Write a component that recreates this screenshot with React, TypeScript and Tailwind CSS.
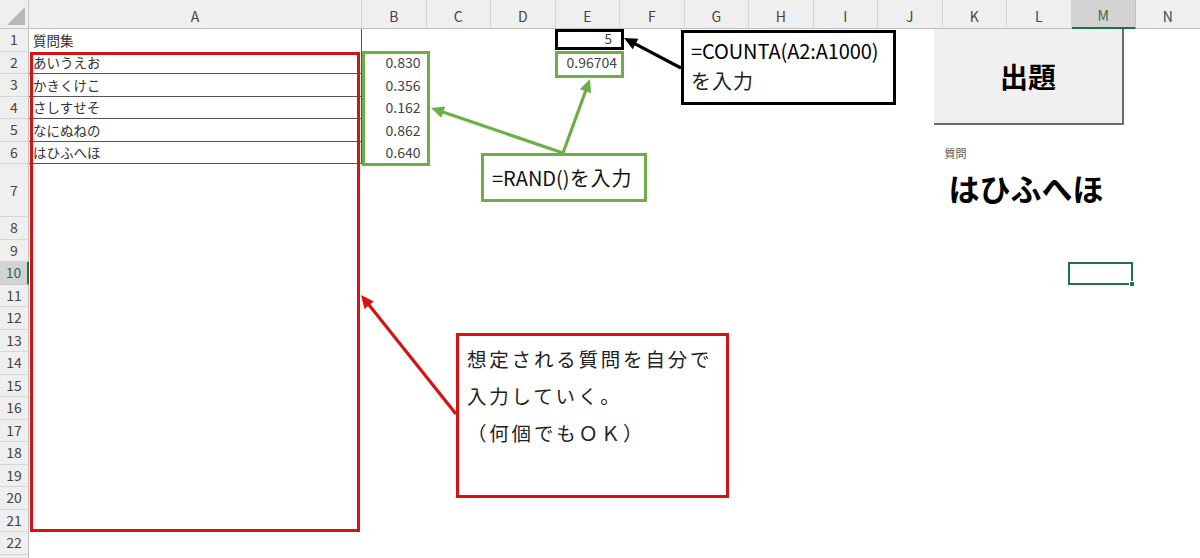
import React from "react";

const FONT = { fontFamily: '"Noto Sans CJK JP", "Noto Sans", sans-serif' };

const COLS = ["A", "B", "C", "D", "E", "F", "G", "H", "I", "J", "K", "L", "M", "N"];
const ROWS = Array.from({ length: 22 }, (_, i) => i + 1);

const questions = ["あいうえお", "かきくけこ", "さしすせそ", "なにぬねの", "はひふへほ"];
const rands = ["0.830", "0.356", "0.162", "0.862", "0.640"];

// draws a straight arrow with a filled head ending exactly at (x2, y2)
function Arrow({ x1, y1, x2, y2, color }: { x1: number; y1: number; x2: number; y2: number; color: string }) {
  const dx = x2 - x1;
  const dy = y2 - y1;
  const len = Math.hypot(dx, dy);
  const ux = dx / len;
  const uy = dy / len;
  const head = 13;
  const hw = 6;
  const bx = x2 - ux * head;
  const by = y2 - uy * head;
  const px = -uy * hw;
  const py = ux * hw;
  return (
    <g>
      <line x1={x1} y1={y1} x2={bx + ux * 2} y2={by + uy * 2} stroke={color} strokeWidth={3.2} />
      <polygon points={`${x2},${y2} ${bx + px},${by + py} ${bx - px},${by - py}`} fill={color} />
    </g>
  );
}

function Cell({ row, col }: { row: number; col: number }) {
  // column A, rows 1-6 hold the bordered question list
  if (col === 1) {
    if (row <= 6) {
      const text = row === 1 ? "質問集" : questions[row - 2];
      return (
        <div className={`flex items-center pl-[4px] text-[13.5px] text-[#333] border-r border-r-[#555] ${row >= 2 ? "border-b border-b-[#555]" : ""}`}>
          {text}
        </div>
      );
    }
    return <div />;
  }
  if (col === 2 && row >= 2 && row <= 6) {
    return <div className="flex items-center justify-end pr-[6px] text-[14px] text-[#444]">{rands[row - 2]}</div>;
  }
  if (col === 5 && row === 1) {
    return <div className="flex items-center justify-end pr-[8px] pb-[4px] text-[13.5px] text-[#444]">5</div>;
  }
  if (col === 5 && row === 2) {
    return <div className="flex items-center justify-end pr-[3px] text-[14px] text-[#444]">0.96704</div>;
  }
  if (col === 11 && row === 6) {
    return <div className="flex items-center pl-[2px] text-[11px] text-[#555] whitespace-nowrap">質問</div>;
  }
  if (col === 11 && row === 7) {
    return <div className="flex items-center pl-[6px] pb-[4px] text-[31px] font-bold text-black whitespace-nowrap">はひふへほ</div>;
  }
  return <div />;
}

export default function App() {
  return (
    <div className="relative w-[1200px] h-[558px] overflow-hidden bg-white" style={FONT}>
      <div className="grid grid-cols-[29px_333px_repeat(13,64.5px)] grid-rows-[29px_repeat(6,22.5px)_53px_repeat(15,22.5px)_1fr] h-[558px]">
        {/* corner with the select-all triangle */}
        <div className="flex items-end justify-end p-[3px] bg-[#efefef] border-r border-b border-[#c6c6c6]">
          <div className="w-0 h-0 border-l-[18px] border-b-[18px] border-l-transparent border-b-[#b8b8b8]" />
        </div>
        {COLS.map((c) =>
          c === "M" ? (
            <div key={c} className="flex items-center justify-center pt-[4px] bg-[#d3d3d3] border-r border-[#c6c6c6] border-b-2 border-b-[#217346] text-[14px] text-[#2f6e4b]">
              {c}
            </div>
          ) : (
            <div key={c} className="flex items-center justify-center pt-[4px] bg-[#efefef] border-r border-[#d6d6d6] border-b border-b-[#bdbdbd] text-[14px] text-[#444]">
              {c}
            </div>
          )
        )}
        {ROWS.map((r) => (
          <React.Fragment key={r}>
            {r === 10 ? (
              <div className="flex items-center justify-center bg-[#d3d3d3] border-b border-[#c6c6c6] border-r-2 border-r-[#217346] text-[14px] text-[#2f6e4b]">
                {r}
              </div>
            ) : (
              <div className="flex items-center justify-center bg-[#efefef] border-b border-[#d6d6d6] border-r border-r-[#bdbdbd] text-[14px] text-[#444]">
                {r}
              </div>
            )}
            {COLS.map((_, i) => (
              <Cell key={i} row={r} col={i + 1} />
            ))}
          </React.Fragment>
        ))}
        <div className="bg-[#efefef] border-r border-r-[#bdbdbd]" />
      </div>

      {/* selected cell M10 */}
      <div className="absolute left-[1068px] top-[262px] w-[65px] h-[23px] border-2 border-[#217346]">
        <div className="absolute right-[-4px] bottom-[-4px] w-[6px] h-[6px] bg-[#217346] border border-white" />
      </div>

      {/* form button */}
      <div className="absolute left-[934px] top-[29px] w-[190px] h-[96px] flex items-center justify-center bg-[#f0f0f0] border-r-2 border-b-2 border-[#6b6b6b] text-[28px] font-bold text-black">
        出題
      </div>

      {/* highlight frames */}
      <div className="absolute left-[30px] top-[52px] w-[330px] h-[480px] border-[3px] border-[#d41414]" />
      <div className="absolute left-[362px] top-[51px] w-[68px] h-[115px] border-[3px] border-[#70ad47]" />
      <div className="absolute left-[555px] top-[51px] w-[69px] h-[27px] border-[3px] border-[#70ad47]" />
      <div className="absolute left-[555px] top-[29px] w-[69px] h-[21px] border-[3px] border-black" />

      {/* callouts */}
      <div className="absolute left-[681px] top-[30px] w-[215px] h-[75px] border-[3px] border-black bg-white pl-[7px] pt-[3px] text-[20px] leading-[30px] text-black">
        <div className="tracking-[-0.1px]">=COUNTA(A2:A1000)</div>
        <div className="text-[#222] tracking-[1px]">を入力</div>
      </div>
      <div className="absolute left-[481px] top-[153px] w-[166px] h-[49px] flex items-center border-[3px] border-[#70ad47] bg-white pl-[8px] text-[20px] text-[#111]">
        =RAND()<span className="tracking-[1px]">を入力</span>
      </div>
      <div className="absolute left-[456px] top-[333px] w-[273px] h-[165px] border-[3px] border-[#d41414] bg-white pl-[8px] pt-[4px] text-[19.5px] leading-[37px] tracking-[2.8px] text-[#222]">
        <div>想定される質問を自分で</div>
        <div>入力していく。</div>
        <div>（何個でもＯＫ）</div>
      </div>

      {/* arrows */}
      <svg className="absolute left-0 top-0 pointer-events-none" width="1200" height="558">
        <Arrow x1={681} y1={68} x2={624} y2={38} color="#000" />
        <Arrow x1={563} y1={153} x2={431} y2={108} color="#70ad47" />
        <Arrow x1={563} y1={153} x2={590} y2={79} color="#70ad47" />
        <Arrow x1={456} y1={414} x2={361} y2={295} color="#d41414" />
      </svg>
    </div>
  );
}
